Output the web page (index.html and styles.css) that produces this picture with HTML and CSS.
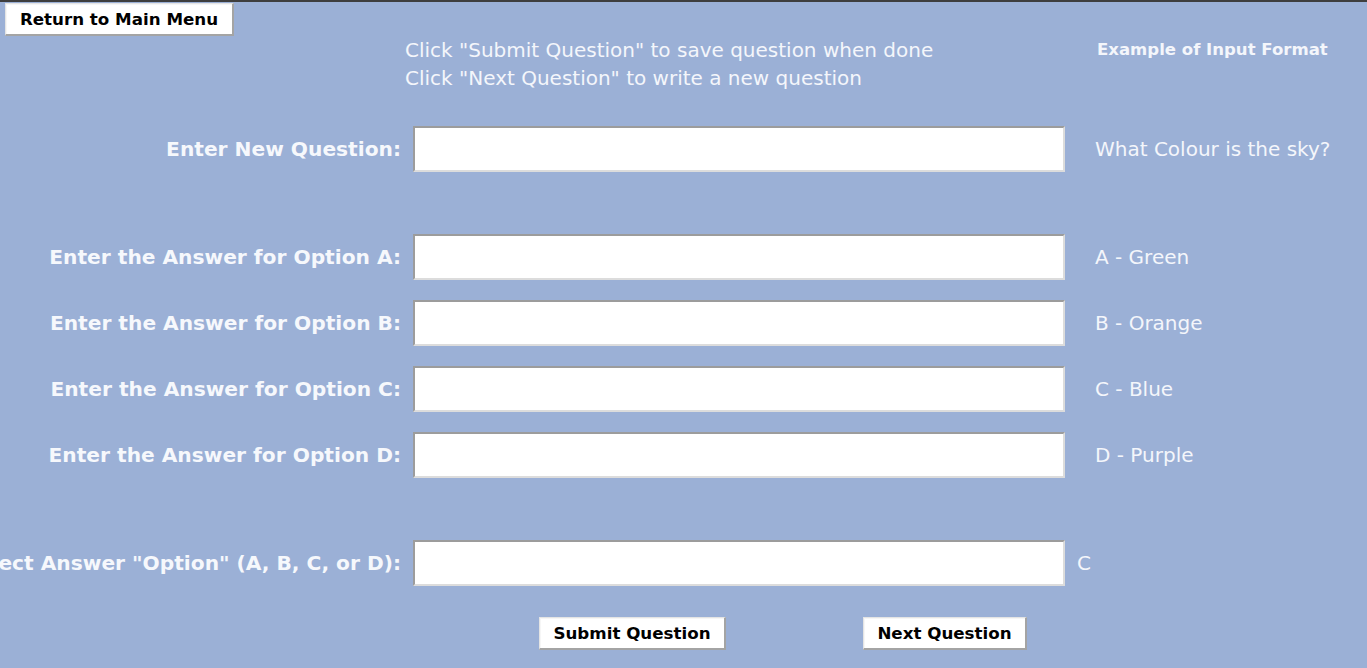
FILE: index.html
```html
<!DOCTYPE html>
<html>
<head>
<meta charset="utf-8">
<link rel="stylesheet" href="styles.css">
</head>
<body>
<div class="window">
  <div class="toolbar">
    <button class="btn btn-back">Return to Main Menu</button>
  </div>
  <div class="header">
    <div class="instructions">
      <div>Click "Submit Question" to save question when done</div>
      <div>Click "Next Question" to write a new question</div>
    </div>
    <div class="example-title">Example of Input Format</div>
  </div>
  <div class="form">
    <div class="row row-question">
      <div class="label"><span>Enter New Question:</span></div>
      <input class="entry" type="text">
      <div class="example">What Colour is the sky?</div>
    </div>
    <div class="row row-first">
      <div class="label"><span>Enter the Answer for Option A:</span></div>
      <input class="entry" type="text">
      <div class="example">A - Green</div>
    </div>
    <div class="row">
      <div class="label"><span>Enter the Answer for Option B:</span></div>
      <input class="entry" type="text">
      <div class="example">B - Orange</div>
    </div>
    <div class="row">
      <div class="label"><span>Enter the Answer for Option C:</span></div>
      <input class="entry" type="text">
      <div class="example">C - Blue</div>
    </div>
    <div class="row">
      <div class="label"><span>Enter the Answer for Option D:</span></div>
      <input class="entry" type="text">
      <div class="example">D - Purple</div>
    </div>
    <div class="row row-answer">
      <div class="label"><span>Enter the Correct Answer "Option" (A, B, C, or D):</span></div>
      <input class="entry" type="text">
      <div class="example example-near">C</div>
    </div>
  </div>
  <div class="actions">
    <button class="btn btn-submit">Submit Question</button>
    <button class="btn btn-next">Next Question</button>
  </div>
</div>
</body>
</html>
```
FILE: styles.css
```css
html, body {
  margin: 0;
  padding: 0;
  height: 100%;
}
body {
  background: #9bb0d6;
  font-family: "DejaVu Sans", "Liberation Sans", sans-serif;
  overflow: hidden;
}
.window {
  border-top: 2px solid #3e3e3e;
  min-height: 666px;
}
.toolbar {
  padding: 1px 0 0 5px;
  height: 33px;
}
.btn {
  font-family: "DejaVu Sans", sans-serif;
  font-weight: bold;
  font-size: 16.7px;
  color: #000;
  background: #fff;
  border-style: solid;
  border-width: 1px 2px 2px 1px;
  border-color: #e4e4e4 #a4a4a4 #a4a4a4 #e4e4e4;
  padding: 0;
  margin: 0;
  height: 33px;
  box-sizing: border-box;
  box-shadow: inset 1px 1px 0 #f6f6f6;
  cursor: default;
}
.btn-back {
  width: 229px;
}
.header {
  display: flex;
  height: 56px;
  margin-bottom: 34px;
}
.instructions {
  margin-left: 405px;
  font-size: 20px;
  line-height: 28px;
  color: #f4f6fb;
  width: 692px;
}
.example-title {
  font-weight: bold;
  font-size: 16.55px;
  line-height: 28px;
  color: #f4f6fb;
}
.form {
  display: flex;
  flex-direction: column;
  gap: 20px;
}
.row {
  display: flex;
  align-items: center;
  height: 46px;
}
.row-first,
.row-answer {
  margin-top: 42px;
}
.label {
  width: 401px;
  flex: none;
  display: flex;
  justify-content: flex-end;
  white-space: nowrap;
  font-weight: bold;
  font-size: 20.2px;
  color: #f6f8fc;
}
.entry {
  flex: none;
  margin: 0 0 0 12px;
  width: 652px;
  height: 46px;
  box-sizing: border-box;
  background: #fff;
  border-style: solid;
  border-width: 2px;
  border-color: #9c9c9c #dcdcdc #dcdcdc #9c9c9c;
  outline: none;
  padding: 0 4px;
  font-family: "DejaVu Sans", sans-serif;
  font-size: 20px;
}
.example {
  margin-left: 30px;
  font-size: 20px;
  color: #f4f6fb;
  white-space: nowrap;
}
.example-near {
  margin-left: 12px;
}
.actions {
  display: flex;
  margin-top: 31px;
  padding-left: 539px;
}
.btn-submit {
  width: 187px;
}
.btn-next {
  width: 164px;
  margin-left: 137px;
}
```
